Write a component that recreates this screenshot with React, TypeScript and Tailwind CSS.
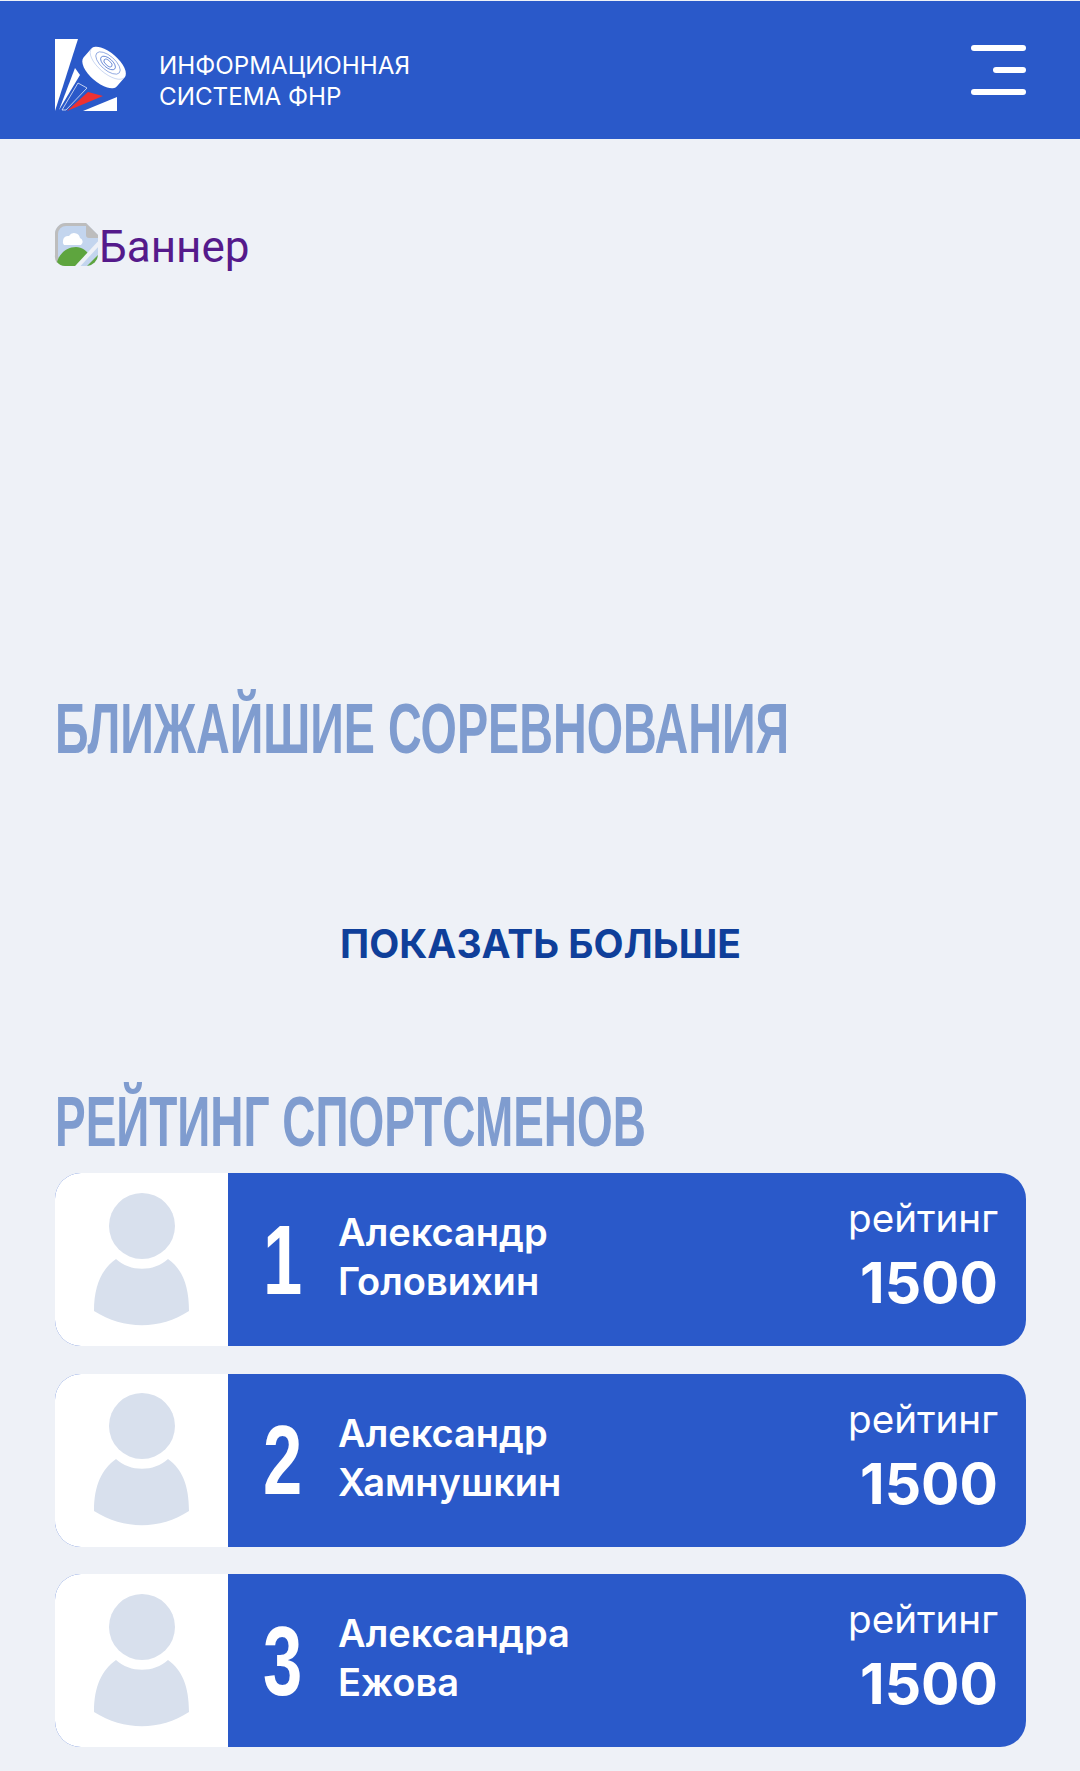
import React from "react";

type Athlete = {
  place: number;
  firstName: string;
  lastName: string;
  rating: number;
};

const athletes: Athlete[] = [
  { place: 1, firstName: "Александр", lastName: "Головихин", rating: 1500 },
  { place: 2, firstName: "Александр", lastName: "Хамнушкин", rating: 1500 },
  { place: 3, firstName: "Александра", lastName: "Ежова", rating: 1500 },
];

const Logo = () => (
  <svg width="72" height="72" viewBox="0 0 72 72" className="shrink-0">
    <polygon points="0,0 23,0 0,72" fill="#fff" />
    <polygon points="20,29 25,36 4,71" fill="#fff" />
    <polygon points="23,44 32,49 11,71 7,71" fill="none" stroke="#fff" strokeWidth="0.7" />
    <polygon points="33,53 48,57 12,72" fill="#ee3131" />
    <polygon points="62,58 62,72 28,72" fill="#fff" />
    <g transform="translate(53 24) rotate(41)">
      <path d="M-22 0 a22 10 0 0 1 44 0 v12 a22 10 0 0 1 -44 0 z" fill="#fff" />
      <path d="M-22 0 a22 10 0 0 0 44 0" fill="none" stroke="#9db4e6" strokeWidth="0.5" />
      <ellipse cx="0" cy="0" rx="15" ry="7" fill="none" stroke="#6f8fd8" strokeWidth="0.7" />
      <ellipse cx="0" cy="0" rx="9" ry="4.5" fill="none" stroke="#5479cf" strokeWidth="0.8" />
      <ellipse cx="0" cy="0" rx="5" ry="2.5" fill="none" stroke="#5479cf" strokeWidth="0.8" />
    </g>
  </svg>
);

const BrokenImage = () => (
  <svg width="45" height="45" viewBox="0 0 45 45" className="mt-[1px] -ml-[1px] shrink-0">
    <path d="M12 1 H32 L44 13 V32 a12 12 0 0 1 -12 12 H12 a11 11 0 0 1 -11 -11 V12 a11 11 0 0 1 11 -11 z" fill="#c3d5ee" />
    <path d="M12 1 H32 L44 13 V16 H35 a3 3 0 0 1 -3 -3 V4 H12 a8 8 0 0 0 -8 8 V33 a8 8 0 0 0 2 6 L3 41 a11 11 0 0 1 -2 -8 V12 a11 11 0 0 1 11 -11 z" fill="#bdbdbd" />
    <path d="M9 19 a5 5 0 0 1 6 -5 a6 6 0 0 1 11 2 a4 4 0 0 1 1 7 H10 a4 4 0 0 1 -1 -4 z" fill="#fff" />
    <path d="M3 40 C6 30 14 25 22 25 C28 25 33 29 35 33 L25 44 H11 a10 10 0 0 1 -8 -4 z" fill="#5ea53e" />
    <path d="M33 44 L44 33 a12 12 0 0 1 -11 11 z" fill="#5ea53e" />
    <path d="M21 47 L47 19" stroke="#eef1f7" strokeWidth="4" />
  </svg>
);

const Avatar = () => (
  <svg width="96" height="134" viewBox="0 0 96 134">
    <circle cx="48" cy="33" r="33" fill="#d8e0ed" />
    <path d="M22 66 C36 79 60 79 74 66 C88 76 95 92 95 118 C66 137 30 137 0 118 C0 92 8 76 22 66 z" fill="#d8e0ed" />
  </svg>
);

const AthleteCard = ({ athlete }: { athlete: Athlete }) => (
  <div className="flex h-[173px] overflow-hidden rounded-[26px] bg-[#2a59c9]">
    <div className="flex w-[173px] shrink-0 items-center justify-center bg-white">
      <Avatar />
    </div>
    <div className="flex flex-1 items-center pr-[28px] text-white">
      <div className="w-[110px] pl-[35px] font-['Liberation_Sans',sans-serif] text-[98px] leading-none font-bold">
        <span className="inline-block origin-left scale-x-[0.72]">{athlete.place}</span>
      </div>
      <div className="mb-[5px] flex-1 text-[38px] leading-[49px] font-semibold">
        <div>{athlete.firstName}</div>
        <div>{athlete.lastName}</div>
      </div>
      <div className="mb-[8px] text-right">
        <div className="text-[38.6px] leading-[46px]">рейтинг</div>
        <div className="mt-[9px] text-[57px] leading-[66px] font-bold">{athlete.rating}</div>
      </div>
    </div>
  </div>
);

const SectionTitle = ({ children, className, textClassName }: { children: React.ReactNode; className?: string; textClassName: string }) => (
  <h2
    className={`overflow-hidden font-['Liberation_Sans',sans-serif] text-[71px] leading-[80px] font-bold whitespace-nowrap text-[#7f9ccf] uppercase ${className ?? ""}`}
  >
    <span className={`inline-block origin-left ${textClassName}`}>{children}</span>
  </h2>
);

export default function App() {
  return (
    <div className="min-h-[1771px] bg-[#eef1f7] pt-px font-['Inter',sans-serif]">
      <header className="flex h-[138px] items-center justify-between bg-[#2a59c9] pr-[54px] pl-[55px]">
        <div className="flex items-start gap-[32px] pt-[10px]">
          <Logo />
          <div className="pt-[11px] text-[24.2px] leading-[31px] text-white">
            <div>ИНФОРМАЦИОННАЯ</div>
            <div>СИСТЕМА ФНР</div>
          </div>
        </div>
        <div className="flex w-[55px] flex-col items-end gap-[16px]">
          <span className="h-[6px] w-full rounded-full bg-white" />
          <span className="h-[6px] w-[33px] rounded-full bg-white" />
          <span className="h-[6px] w-full rounded-full bg-white" />
        </div>
      </header>

      <main className="pr-[54px] pl-[55px]">
        <a className="mt-[82px] flex h-[385px] items-start font-['Roboto',sans-serif] text-[44px] leading-[52px] text-[#551a8b]">
          <BrokenImage />
          <span>Баннер</span>
        </a>

        <SectionTitle className="mt-[83px]" textClassName="scale-x-[0.658]">
          Ближайшие соревнования
        </SectionTitle>

        <div className="mt-[152px] text-center text-[39px] leading-[45px] font-bold text-[#0f3f9a] uppercase">
          Показать больше
        </div>

        <SectionTitle className="mt-[116px]" textClassName="scale-x-[0.647]">
          Рейтинг спортсменов
        </SectionTitle>

        <div className="mt-[11px] flex flex-col gap-[27.5px]">
          {athletes.map((athlete) => (
            <AthleteCard key={athlete.place} athlete={athlete} />
          ))}
        </div>
      </main>
    </div>
  );
}
